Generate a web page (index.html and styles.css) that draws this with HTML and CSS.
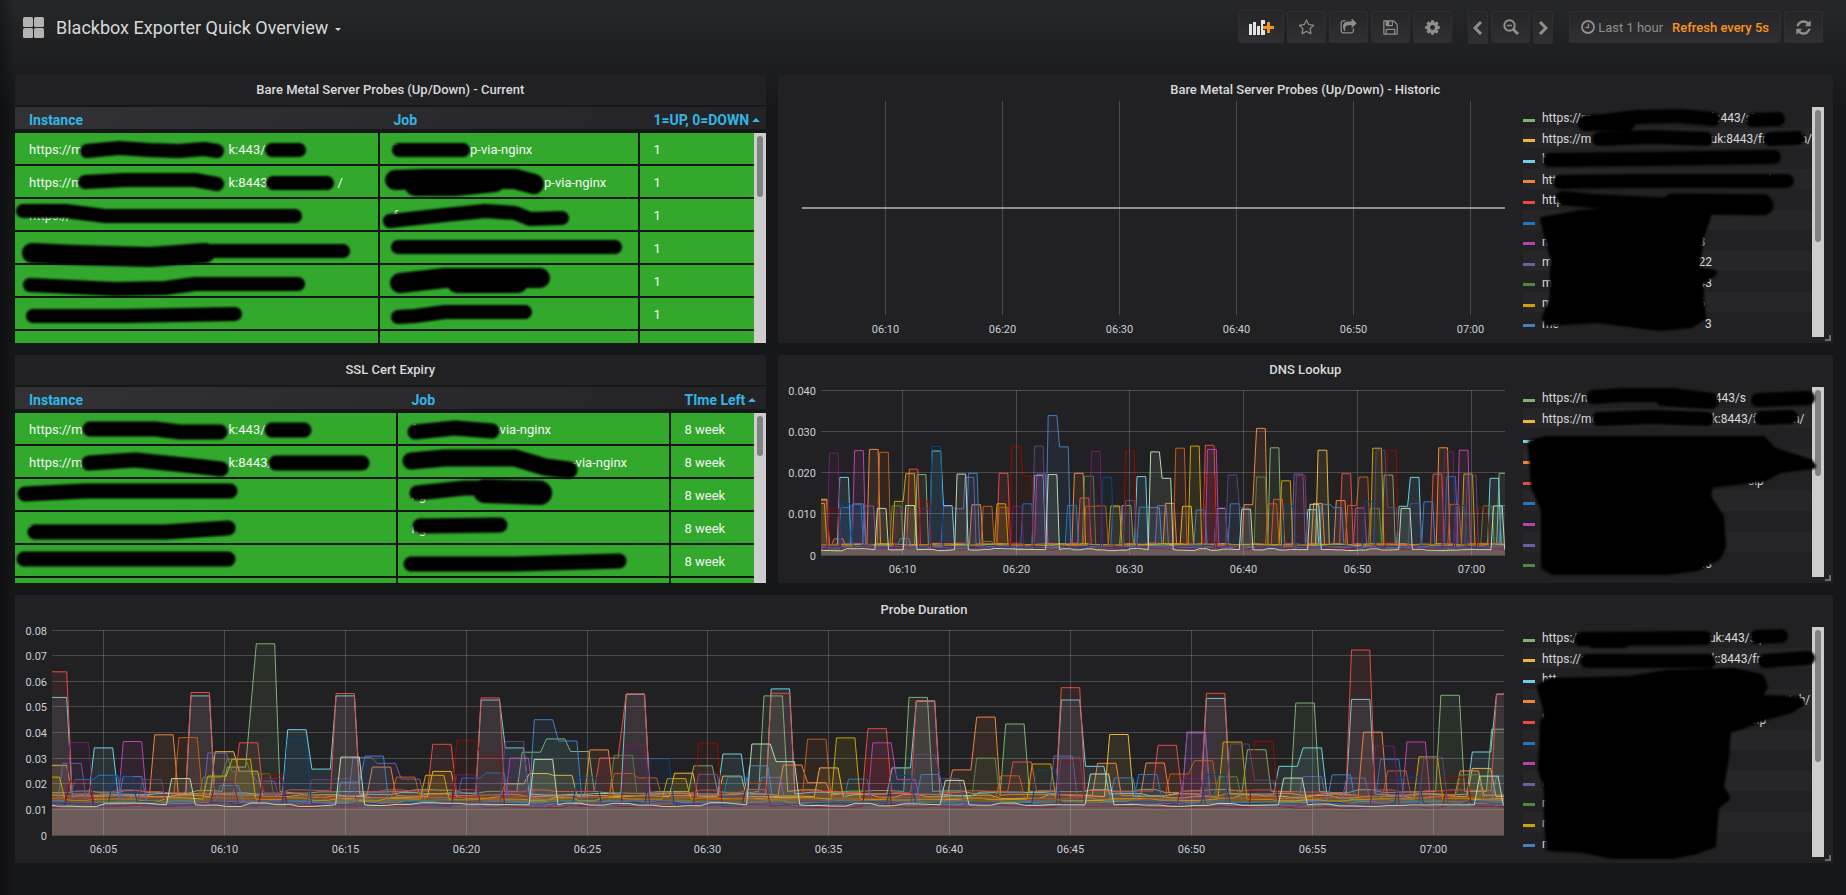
FILE: index.html
```html
<!DOCTYPE html>
<html lang="en">
<head>
    <meta charset="UTF-8">
    <meta name="viewport" content="width=device-width, initial-scale=1.0">
    <title>Blackbox Exporter Quick Overview</title>
    <link rel="stylesheet" href="styles.css">
</head>
<body>
    <!-- Navbar -->
    <header class="navbar">
        <button class="dash-title" type="button">
            <svg class="dash-logo" viewBox="0 0 21 21" aria-hidden="true"><rect width="10" height="10" rx="1.5"/><rect x="11" width="10" height="10" rx="1.5"/><rect y="11" width="10" height="10" rx="1.5"/><rect x="11" y="11" width="10" height="10" rx="1.5"/></svg>
            <span>Blackbox Exporter Quick Overview</span>
            <i class="caret"></i>
        </button>
        <nav class="toolbar">
            <div class="btn-group">
                <button class="btn btn-add" type="button" aria-label="Add panel">
                    <svg width="25" height="16" viewBox="0 0 25 16"><path fill="#e3e3e3" d="M0 5h3v11H0zM4 3h3v13H4zM8 7h3v9H8zM12 1h4v4h-2v6h2v5h-4z"/><path fill="#f7941d" d="M18 3h3v4h4v3h-4v4h-3v-4h-4V7h4z"/></svg>
                </button>
                <button class="btn" type="button" aria-label="Mark as favorite">
                    <svg width="17" height="17" viewBox="0 0 1792 1792"><path d="M1201 1004l306-297-422-62-189-382-189 382-422 62 306 297-73 421 378-199 377 199zm527-357q0 22-26 48l-363 354 86 500q1 7 1 20 0 50-41 50-19 0-40-12l-449-236-449 236q-22 12-40 12-21 0-31.500-14.500t-10.500-35.500q0-6 2-20l86-500-364-354q-25-27-25-48 0-37 56-46l502-73 225-455q19-41 49-41t49 41l225 455 502 73q56 9 56 46z"/></svg>
                </button>
                <button class="btn" type="button" aria-label="Share dashboard">
                    <svg width="17" height="17" viewBox="0 0 1792 1792"><path d="M1472 989v259q0 119-84.500 203.500t-203.500 84.500h-832q-119 0-203.500-84.500t-84.500-203.500v-832q0-119 84.500-203.500t203.500-84.500h255q13 0 22.500 9.500t9.500 22.500q0 27-26 32-77 26-133 60-10 4-16 4h-112q-66 0-113 47t-47 113v832q0 66 47 113t113 47h832q66 0 113-47t47-113v-214q0-19 18-29 28-13 54-37 16-16 35-8 21 9 21 29zm237-496l-384 384q-18 19-45 19-12 0-25-5-39-17-39-59v-192h-160q-323 0-438 131-119 137-74 473 3 23-20 34-8 2-12 2-16 0-26-13-10-14-21-31t-39.500-68.500-49.500-99.500-38.500-114-17.500-122q0-49 3.500-91t14-90 28-88 47-81.500 68.500-74 94.500-61.500 124.500-48.500 159.500-30.500 196.500-11h160v-192q0-42 39-59 13-5 25-5 26 0 45 19l384 384q19 19 19 45t-19 45z"/></svg>
                </button>
                <button class="btn" type="button" aria-label="Save dashboard">
                    <svg width="17" height="17" viewBox="0 0 1792 1792"><path d="M512 1536h768v-384h-768v384zm896 0h128v-896q0-14-10-38.500t-20-34.500l-281-281q-10-10-34-20t-39-10v416q0 40-28 68t-68 28h-576q-40 0-68-28t-28-68v-416h-128v1280h128v-416q0-40 28-68t68-28h832q40 0 68 28t28 68v416zm-384-928v-320q0-13-9.500-22.500t-22.500-9.500h-192q-13 0-22.500 9.500t-9.500 22.500v320q0 13 9.500 22.500t22.500 9.500h192q13 0 22.500-9.500t9.500-22.500zm640 32v928q0 40-28 68t-68 28h-1344q-40 0-68-28t-28-68v-1344q0-40 28-68t68-28h928q40 0 88 20t76 48l280 280q28 28 48 76t20 88z"/></svg>
                </button>
                <button class="btn" type="button" aria-label="Settings">
                    <svg width="17" height="17" viewBox="0 0 1792 1792"><path d="M1152 896q0-106-75-181t-181-75-181 75-75 181 75 181 181 75 181-75 75-181zm512-109v222q0 12-8 23t-20 13l-185 28q-19 54-39 91 35 50 107 138 10 12 10 25t-9 23q-27 37-99 108t-94 71q-12 0-26-9l-138-108q-44 23-91 38-16 136-29 186-7 28-36 28h-222q-14 0-24.500-8.500t-11.500-21.500l-28-184q-49-16-90-37l-141 107q-10 9-25 9-14 0-25-11-126-114-165-168-7-10-7-23 0-12 8-23 15-21 51-66.500t54-70.500q-27-50-41-99l-183-27q-13-2-21-12.500t-8-23.500v-222q0-12 8-23t19-13l186-28q14-46 39-92-40-57-107-138-10-12-10-24 0-10 9-23 26-36 98.500-107.500t94.500-71.500q13 0 26 10l138 107q44-23 91-38 16-136 29-186 7-28 36-28h222q14 0 24.500 8.500t11.500 21.500l28 184q49 16 90 37l142-107q9-9 24-9 13 0 25 10 129 119 165 170 7 8 7 22 0 12-8 23-15 21-51 66.500t-54 70.500q26 50 41 98l183 28q13 2 21 12.500t8 23.500z"/></svg>
                </button>
            </div>
            <div class="btn-group">
                <button class="btn btn-narrow" type="button" aria-label="Back in time">
                    <svg class="line" width="10" height="14" viewBox="0 0 10 14"><path stroke-width="3" d="M8 1L2 7l6 6"/></svg>
                </button>
                <button class="btn" type="button" aria-label="Zoom out">
                    <svg class="line" width="16" height="16" viewBox="0 0 16 16"><circle cx="6.500" cy="6.500" r="5.200" stroke-width="2"/><path stroke-width="3" d="M10.500 10.500L15 15"/><path stroke-width="1.500" d="M4 6.500h5"/></svg>
                </button>
                <button class="btn btn-narrow" type="button" aria-label="Forward in time">
                    <svg class="line" width="10" height="14" viewBox="0 0 10 14"><path stroke-width="3" d="M2 1l6 6-6 6"/></svg>
                </button>
            </div>
            <div class="btn-group">
                <button class="btn btn-time" type="button">
                    <svg class="line" width="14" height="14" viewBox="0 0 14 14"><circle cx="7" cy="7" r="6" stroke-width="1.800"/><path stroke-width="1.300" d="M7.500 3.500v4H4.500"/></svg>
                    <span>Last 1 hour</span>
                    <span class="refresh">Refresh every 5s</span>
                </button>
                <button class="btn" type="button" aria-label="Refresh">
                    <svg width="17" height="17" viewBox="0 0 1792 1792"><path d="M1639 1056q0 5-1 7-64 268-268 434.500t-478 166.500q-146 0-282.500-55t-243.500-157l-129 129q-19 19-45 19t-45-19-19-45v-448q0-26 19-45t45-19h448q26 0 45 19t19 45-19 45l-137 137q71 66 161 102t187 36q134 0 250-65t186-179q11-17 53-117 8-23 30-23h192q13 0 22.500 9.500t9.500 22.500zm25-800v448q0 26-19 45t-45 19h-448q-26 0-45-19t-19-45 19-45l138-138q-148-137-349-137-134 0-250 65t-186 179q-11 17-53 117-8 23-30 23h-199q-13 0-22.500-9.500t-9.500-22.500v-7q65-268 270-434.500t480-166.500q146 0 284 55.500t245 156.500l130-129q19-19 45-19t45 19 19 45z"/></svg>
                </button>
            </div>
        </nav>
    </header>

    <main class="dashboard">
        <!-- Up/Down table -->
        <section class="panel panel-tall col-5">
            <h2 class="panel-title">Bare Metal Server Probes (Up/Down) - Current</h2>
            <div class="table-wrap">
                <table class="probes">
                    <thead>
                        <tr><th>Instance</th><th>Job</th><th>1=UP, 0=DOWN<i class="sort"></i></th></tr>
                    </thead>
                    <tbody>
                        <tr><td>https://m<i class="cut cut-xl"></i>k:443/s</td><td>f<i class="cut cut-md"></i>p-via-nginx</td><td>1</td></tr>
                        <tr><td>https://m<i class="cut cut-xl"></i>k:8443/f<i class="cut cut-sm"></i>/</td><td>f<i class="cut cut-xl"></i>p-via-nginx</td><td>1</td></tr>
                        <tr><td>https://</td><td>f</td><td>1</td></tr>
                        <tr><td></td><td>f</td><td>1</td></tr>
                        <tr><td></td><td>f</td><td>1</td></tr>
                        <tr><td></td><td>n</td><td>1</td></tr>
                        <tr><td></td><td></td><td></td></tr>
                    </tbody>
                </table>
                <div class="scrollbar table-scroll"><div class="thumb thumb-up"></div></div>
            </div>
            <svg class="marker" aria-hidden="true">
                <g stroke-width="14">
                    <path d="M72 76L104 73L134 75L164 76L189 74L202 76M257 75H284M384 75H448"/>
                    <path d="M70 107L110 105L180 105L202 109M258 108H312"/>
                    <path d="M8 136L50 136L90 141H280M375 146L430 140L470 136L500 138L515 144L547 143"/>
                    <path d="M190 176H328M383 172H600"/>
                    <path d="M15 210L100 214L150 213L180 209H283"/>
                    <path d="M18 241L110 241L220 239M383 242L400 241L430 237H510"/>
                </g>
                <g stroke-width="20">
                    <path d="M380 105L410 104L500 104L519 109"/>
                    <path d="M400 111L440 111L480 107"/>
                    <path d="M17 178L60 180L135 182L190 178"/>
                    <path d="M385 208L430 203L525 203M442 208H503"/>
                </g>
            </svg>
        </section>

        <!-- Up/Down graph -->
        <section class="panel panel-tall col-7">
            <h2 class="panel-title">Bare Metal Server Probes (Up/Down) - Historic</h2>
            <div class="graph">
                <div class="chart" id="chart-updown"></div>
                <div class="legend">
                    <ul>
                        <li>https://m<i class="cut cut-lg"></i>k:443/si</li>
                        <li>https://m<i class="cut cut-lg"></i>uk:8443/fre<i class="cut cut-xs"></i>h/</li>
                        <li>h</li>
                        <li>htt<i class="cut cut-xxl"></i>ch/</li>
                        <li>http</li>
                        <li></li>
                        <li>m<i class="cut cut-xl"></i>3</li>
                        <li>m<i class="cut cut-xl"></i>22</li>
                        <li>m<i class="cut cut-xl"></i>43</li>
                        <li>m<i class="cut cut-xl"></i>6</li>
                        <li>me<i class="cut cut-xl"></i>3</li>
                    </ul>
                    <div class="scrollbar"><div class="thumb thumb-legend"></div></div>
                    <svg class="marker" aria-hidden="true">
                        <g stroke-width="14">
                            <path d="M63 15L80 14L114 10L157 9L190 12M62 17L105 17M230 13L255 12"/>
                            <path d="M76 32L130 30L183 32M247 32L275 31"/>
                            <path d="M27 53L120 52L251 50"/>
                            <path d="M37 75L110 74H264"/>
                            <path d="M40 91L70 94L150 98"/>
                        </g>
                        <path stroke-width="21" d="M150 97L170 97L240 98"/>
                        <path class="blob" d="M20 113L57 106L97 103L186 106L178 130L173 163L191 166L177 176L180 210L168 218L137 221L74 213L24 216L22 211L30 190L30 150z"/>
                    </svg>
                </div>
            </div>
            <i class="resize"></i>
        </section>

        <!-- SSL table -->
        <section class="panel panel-short col-5">
            <h2 class="panel-title">SSL Cert Expiry</h2>
            <div class="table-wrap">
                <table class="certs">
                    <thead>
                        <tr><th>Instance</th><th>Job</th><th>TIme Left<i class="sort"></i></th></tr>
                    </thead>
                    <tbody>
                        <tr><td>https://m<i class="cut cut-xl"></i>k:443/s</td><td>f<i class="cut cut-md2"></i>-via-nginx</td><td>8 week</td></tr>
                        <tr><td>https://m<i class="cut cut-xl"></i>k:8443/f</td><td>f<i class="cut cut-xl2"></i>-via-nginx</td><td>8 week</td></tr>
                        <tr><td></td><td>ng</td><td>8 week</td></tr>
                        <tr><td>m</td><td>ng</td><td>8 week</td></tr>
                        <tr><td></td><td></td><td>8 week</td></tr>
                        <tr><td></td><td></td><td></td></tr>
                    </tbody>
                </table>
                <div class="scrollbar table-scroll"><div class="thumb thumb-cert"></div></div>
            </div>
            <svg class="marker" aria-hidden="true">
                <g stroke-width="15">
                    <path d="M75 74L140 74L165 77L205 77M257 75H289M400 77L440 73L477 76"/>
                    <path d="M74 108L120 105L170 110L206 114M261 108H347"/>
                    <path d="M10 139L70 136H215M402 138L450 133H525"/>
                    <path d="M20 177L150 177L213 173M405 171L485 170"/>
                    <path d="M9 204H213M396 209L500 209L604 206"/>
                </g>
                <path stroke-width="17" d="M396 106L430 103L500 103L530 112L554 115"/>
                <path stroke-width="24" d="M470 136L525 138"/>
            </svg>
        </section>

        <!-- DNS graph -->
        <section class="panel panel-short col-7">
            <h2 class="panel-title">DNS Lookup</h2>
            <div class="graph">
                <div class="chart" id="chart-dns"></div>
                <div class="legend">
                    <ul>
                        <li>https://me<i class="cut cut-lg2"></i>:443/s</li>
                        <li>https://me<i class="cut cut-lg2"></i>k:8443/f<i class="cut cut-sm2"></i>h/</li>
                        <li></li>
                        <li></li>
                        <li><i class="cut cut-xxl"></i>sip</li>
                        <li><i class="cut cut-xxl2"></i>6</li>
                        <li></li>
                        <li><i class="cut cut-xl"></i>:8</li>
                        <li>m<i class="cut cut-xl"></i>43</li>
                    </ul>
                    <div class="scrollbar"><div class="thumb thumb-dns"></div></div>
                    <svg class="marker" aria-hidden="true">
                        <g stroke-width="14">
                            <path d="M70 10L100 8L150 8L188 13M140 12L188 15M235 13L285 11"/>
                            <path d="M76 32L130 30L184 32M238 31L268 30"/>
                        </g>
                        <path class="blob" d="M8 56L24 52L124 52L240 52L250 63L287 75L290 79L257 83L240 92L187 98L185 110L198 130L200 160L195 170L174 181L144 185L30 185L21 180L21 123L11 100z"/>
                    </svg>
                </div>
            </div>
            <i class="resize"></i>
        </section>

        <!-- Probe duration graph -->
        <section class="panel panel-tall col-12">
            <h2 class="panel-title">Probe Duration</h2>
            <div class="graph">
                <div class="chart" id="chart-probe"></div>
                <div class="legend">
                    <ul>
                        <li>https://<i class="cut cut-xl4"></i>uk:443/sip</li>
                        <li>https://m<i class="cut cut-lg"></i>k:8443/fre</li>
                        <li>htt<i class="cut cut-lg"></i>x.co.uk:4</li>
                        <li><i class="cut cut-sm2"></i>m<i class="cut cut-xl3"></i>tch/</li>
                        <li>h<i class="cut cut-xs2"></i>med<i class="cut cut-xl"></i>sip</li>
                        <li></li>
                        <li></li>
                        <li>m</li>
                        <li>m</li>
                        <li>m</li>
                        <li>me</li>
                    </ul>
                    <div class="scrollbar"><div class="thumb thumb-legend"></div></div>
                    <svg class="marker" aria-hidden="true">
                        <g stroke-width="14">
                            <path d="M58 12L182 11M70 14L100 14M234 10L258 9"/>
                            <path d="M64 34L186 34M242 34L285 31"/>
                        </g>
                        <path class="blob" d="M17 60L26 54L107 52L144 46L210 44L238 50L242 60L235 71L275 72L279 76L268 83L240 91L220 99L205 103L203 130L198 160L204 171L193 180L190 218L174 224L150 229L90 229L60 223L26 221L24 196L24 163L18 143L20 96L24 86z"/>
                    </svg>
                </div>
            </div>
            <i class="resize"></i>
        </section>
    </main>

    <script src="charts.js"></script>
</body>
</html>
```
FILE: styles.css
```css
* {
    box-sizing: border-box;
}

body {
    margin: 0;
    min-height: 100vh;
    padding: 0 13px 0 15px;
    font-family: Roboto, "Liberation Sans", sans-serif;
    font-size: 13px;
    color: #d8d9da;
    background:
        linear-gradient(90deg, rgba(0, 0, 0, 0.35), transparent 15px),
        linear-gradient(180deg, #262729, #161719 110px) #161719;
}

h2, ul {
    margin: 0;
    padding: 0;
}

button {
    font-family: inherit;
    color: inherit;
    cursor: pointer;
}

/* Navbar */
.navbar {
    display: flex;
    justify-content: space-between;
    align-items: flex-start;
    height: 75px;
    padding: 10px 10px 0 8px;
}

.dash-title {
    display: flex;
    align-items: center;
    gap: 12px;
    height: 34px;
    padding: 0;
    border: none;
    background: none;
    font-size: 18px;
}

.dash-logo {
    width: 21px;
    height: 21px;
    fill: #b3b3b3;
}

.caret {
    margin: 5px 0 0 -5px;
    border: 3px solid transparent;
    border-top-color: #d8d9da;
    border-bottom: none;
}

.toolbar {
    display: flex;
    gap: 16px;
}

.btn-group {
    display: flex;
    align-items: flex-start;
    gap: 3px;
}

.btn {
    display: flex;
    align-items: center;
    justify-content: center;
    width: 39px;
    height: 32px;
    margin-top: 1px;
    padding: 0;
    border: 1px solid #2f2f32;
    border-radius: 2px;
    background: linear-gradient(180deg, #262628, #303032);
    color: #8e8e8e;
    font-size: 13px;
}

.btn svg {
    fill: currentColor;
}

.btn svg.line {
    fill: none;
    stroke: currentColor;
}

.btn-add {
    width: 46px;
    height: 33px;
    margin-top: 0;
}

.btn-narrow {
    width: 20px;
    height: 33px;
}

.btn-time {
    width: auto;
    padding: 0 11px;
    gap: 3px;
    font-weight: 500;
}

.btn-time span:not(.refresh) {
    font-weight: 400;
}

.refresh {
    margin-left: 6px;
    color: #f7941d;
}

/* Panels */
.dashboard {
    display: grid;
    grid-template-columns: repeat(12, 1fr);
    gap: 12px;
}

.panel {
    position: relative;
    display: flex;
    flex-direction: column;
    min-width: 0;
    background: #212124;
    border-radius: 2px;
}

.panel-tall { height: 268px; }
.panel-short { height: 228px; }
.col-5 { grid-column: span 5; }
.col-7 { grid-column: span 7; }
.col-12 { grid-column: span 12; }

.panel-title {
    padding-top: 4px;
    line-height: 22px;
    font-size: 13px;
    font-weight: 500;
    text-align: center;
}

/* Tables */
.table-wrap {
    position: relative;
    flex: 1;
    overflow: hidden;
    padding-top: 4px;
}

table {
    width: 100%;
    table-layout: fixed;
    border-spacing: 0;
}

/* the first column takes what is left */
.probes th:nth-child(2) { width: 260px; }
.probes th:nth-child(3) { width: 126px; }
.certs th:nth-child(2) { width: 273px; }
.certs th:nth-child(3) { width: 95px; }

thead tr {
    background: linear-gradient(135deg, #323235, #232326);
}

th {
    height: 28px;
    padding: 4px 0 0 14px;
    border: solid #161719;
    border-width: 2px 0 4px;
    color: #33b5e5;
    font-size: 14px;
    font-weight: 700;
    line-height: 18px;
    text-align: left;
    white-space: nowrap;
}

.sort {
    display: inline-block;
    margin: 0 0 3px 3px;
    border: 4px solid transparent;
    border-bottom-color: #33b5e5;
    border-top: none;
}

td {
    height: 33px;
    padding: 2px 0 0 14px;
    border: solid #161719;
    border-width: 0 2px 2px 0;
    background: #32a82d;
    color: #f2f7f2;
    white-space: nowrap;
    overflow: hidden;
}

/* Scrollbars */
.scrollbar {
    width: 12px;
    padding: 3px;
    background: #cdcdcd;
}

.table-scroll {
    position: absolute;
    top: 32px;
    right: 0;
    bottom: 0;
}

.thumb {
    border-radius: 3px;
    background: #7f8282;
}

.thumb-up { height: 61px; }
.thumb-cert { height: 40px; }
.thumb-dns { height: 86px; }
.thumb-legend { height: 132px; }

/* Graphs */
.graph {
    display: flex;
    flex: 1;
    min-height: 0;
    padding: 0 9px;
    gap: 9px;
}

.chart {
    flex: 1;
    min-width: 0;
}

.chart svg {
    display: block;
}

.chart text {
    fill: #c7d0d9;
    font-size: 11px;
}

.legend {
    position: relative;
    display: flex;
    width: 301px;
    margin: 6px 0;
}

.legend ul {
    display: flex;
    flex-direction: column;
    flex: 1;
    min-width: 0;
    padding-bottom: 4px;
    list-style: none;
    font-size: 12px;
}

.legend li {
    display: flex;
    align-items: center;
    flex: 1;
    padding-top: 2px;
    white-space: nowrap;
}

.legend li::before {
    content: "";
    width: 12px;
    height: 3px;
    margin: 4px 7px 0 0;
    background: #7eb26d;
}

.legend li:nth-child(even) { background: #262629; }
.legend li:nth-child(2)::before { background: #eab839; }
.legend li:nth-child(3)::before { background: #6ed0e0; }
.legend li:nth-child(4)::before { background: #ef843c; }
.legend li:nth-child(5)::before { background: #e24d42; }
.legend li:nth-child(6)::before { background: #1f78c1; }
.legend li:nth-child(7)::before { background: #ba43a9; }
.legend li:nth-child(8)::before { background: #705da0; }
.legend li:nth-child(9)::before { background: #508642; }
.legend li:nth-child(10)::before { background: #cca300; }
.legend li:nth-child(11)::before { background: #447ebc; }

.resize {
    position: absolute;
    right: 2px;
    bottom: 2px;
    width: 6px;
    height: 6px;
    border: solid #6a6a6c;
    border-width: 0 2px 2px 0;
}

/* Blacked out host names */
.cut { display: inline-block; }
.cut-xs { width: 28px; }
.cut-xs2 { width: 32px; }
.cut-sm2 { width: 36px; }
.cut-sm { width: 60px; }
.cut-md { width: 72px; }
.cut-md2 { width: 80px; }
.cut-lg2 { width: 114px; }
.cut-lg { width: 120px; }
.cut-xl4 { width: 128px; }
.cut-xl { width: 146px; }
.cut-xl2 { width: 156px; }
.cut-xxl2 { width: 160px; }
.cut-xl3 { width: 200px; }
.cut-xxl { width: 206px; }

.marker {
    position: absolute;
    top: 0;
    left: 0;
    width: 100%;
    height: 100%;
    overflow: visible;
    pointer-events: none;
    fill: none;
    stroke: #000;
    stroke-linecap: round;
    stroke-linejoin: round;
    filter: blur(1px);
}

.marker .blob {
    fill: #000;
    stroke-width: 6px;
}
```
FILE: charts.js
```js
const COLORS = {
    green: "#7EB26D", yellow: "#EAB839", cyan: "#6ED0E0", orange: "#EF843C",
    red: "#E24D42", blue: "#1F78C1", magenta: "#BA43A9", purple: "#705DA0",
    darkGreen: "#508642", darkYellow: "#CCA300", steel: "#447EBC", darkOrange: "#C15C17",
    darkRed: "#890F02", navy: "#0A437C", plum: "#6D1F62", violet: "#584477", lightGreen: "#B7DBAB"
};

// each spike is [minute after 06:00, value in ms]
const DNS = {
    green: [2.5, [[11.7, 19.5], [29.7, 12], [42.7, 26], [52.7, 19.4], [62.8, 19.8]]],
    yellow: [2.4, [[3, 13.5], [35, 11.8], [46.9, 25.4]]],
    cyan: [2.1, [[4.9, 18.8], [13, 25.2], [14, 12], [22, 19.3], [31, 19], [38, 11.3], [46, 11], [54, 11.8], [55, 18.8], [62, 18.6]]],
    orange: [2.4, [[4.4, 3.9], [7.5, 25.6], [16.5, 12.2], [25.5, 19.8], [33.5, 12.5], [40.4, 12.2], [41.5, 30.7], [46.5, 12.5], [48.5, 13.2], [57.5, 26]]],
    red: [2.6, [[3, 13.2], [11, 20.8], [18.9, 19.8], [26, 13.8], [37, 26.6], [43, 13.5], [49, 19.7], [57, 19.6]]],
    blue: [2.1, [[6, 12.3], [21, 12.4], [24.9, 12], [58.2, 19]]],
    magenta: [1.8, [[6.2, 25.3], [22.2, 19.6], [37.2, 25.6], [50.2, 11.4], [59.3, 25.4]]],
    purple: [1.9, [[7.1, 11.9], [14, 11.8], [15, 11.2], [15.9, 18.8], [28.9, 11.7], [32.8, 12], [44.8, 19.6], [59, 12]]],
    darkGreen: [2.3, [[9.5, 11.9], [17.5, 3.3], [26.4, 19.1], [41.5, 18.9], [51.5, 11.3], [61.4, 11.9]]],
    darkYellow: [2.5, [[2.8, 12.5], [9.7, 13], [10.7, 19.7], [18.7, 12.4], [28.7, 11.9], [35.7, 26.4], [43.7, 18], [51.7, 25.9], [59.7, 19.6]]],
    steel: [2, [[5, 11.5], [6.2, 12.4], [10.2, 4], [16.2, 19.8], [23.2, 33.8], [24.2, 26.2], [31.2, 11.6], [32.2, 11.5], [36.2, 10.9], [39.2, 12.4], [47.2, 12.3], [48.2, 11.5], [56.2, 12.9], [63, 12]]],
    darkOrange: [2.3, [[8.4, 24.9], [17.5, 11.8], [18.9, 11.6], [26.5, 11.8], [27.5, 11.9], [34.4, 25.9], [42.5, 12.4], [49.5, 12], [50.5, 18.9], [58.5, 12.3]]],
    darkRed: [1.7, [[4, 11.4], [12, 13], [20, 26.4], [21, 19.1], [30, 25.2], [37, 19.3], [45, 19], [53, 25.4], [61, 11.6]]],
    navy: [2.1, [[5.1, 12.4], [13, 26.3], [28, 18.8], [44, 11.8], [51, 13], [59, 12]]],
    plum: [1.4, [[4, 24.7], [9.9, 11], [12, 11.3], [20.1, 11.8], [27, 25.1], [38, 11.5], [58, 25]]],
    violet: [1.9, [[22, 26.4], [30, 13.2], [39, 19.4], [40, 11.5], [45, 19.3], [52, 25.4], [53, 11.5], [55, 12.5], [60, 19.4]]],
    lightGreen: [1.3, [[8.2, 11.3], [10.7, 12], [15.2, 19.6], [23.2, 19.5], [32.2, 25], [33.2, 18.6], [40.2, 11.1], [46.2, 12.3], [54.2, 11.3], [62.3, 11.9]]]
};

const PROBE = {
    green: [17, [[10.5, 26.5], [11.7, 74.6], [22.7, 32.3], [23.7, 37.5], [24.7, 32.6], [29.8, 27], [32.7, 54.3], [38.7, 53.7], [42.7, 43.3], [52.7, 33.3], [54.7, 51.5], [60.7, 54.5], [62.8, 41.3]]],
    yellow: [15, [[3.1, 27.2], [10, 32.5], [11, 24.9], [19, 24.8], [22, 20], [23, 24], [24, 23.3], [29, 24.1], [31, 23], [35, 26.2], [47, 39.2], [62, 26]]],
    cyan: [16, [[3.1, 53.7], [5, 34], [9, 54.3], [13, 41.1], [14, 25.7], [15, 54.3], [21, 52.7], [22, 34], [27, 54.9], [31, 31.6], [33, 57], [38, 26.2], [39, 52.2], [45, 52.7], [46, 26.8], [51, 53.3], [54, 26.8], [55, 34], [57, 52.9], [62, 32.4], [63, 55]]],
    orange: [15.5, [[7.5, 39.1], [16.5, 26.5], [25.5, 33.2], [33.5, 27.3], [34.5, 20.4], [40.5, 25.4], [41.5, 46], [46.5, 28], [48.5, 28.1], [57.5, 40.1], [61.5, 25]]],
    red: [17, [[3.1, 63.7], [9, 55.6], [11, 36], [15, 55.2], [19, 35.4], [21, 53.5], [25.9, 30], [27, 55.1], [33, 55.3], [37, 41.5], [39, 52.5], [43, 28.5], [45, 57.5], [49, 35], [51, 55.3], [57, 72.2], [63, 55]]],
    blue: [13, [[4.2, 21.7], [5.2, 23.3], [20.2, 22.2], [21.2, 24.2], [31.2, 22.5], [36.2, 21.8], [48.2, 23.6], [58.2, 29.6]]],
    magenta: [12, [[6.2, 36.5], [22.2, 30], [37.2, 36], [38.2, 21.7], [50.2, 40.2], [59.3, 36.3]]],
    purple: [12.5, [[3.7, 28], [9.7, 32], [10.7, 24.7], [11.7, 21], [15.7, 30.2], [16.7, 28], [17.7, 21.8], [30, 23.7], [32.6, 22.5], [44.7, 30.8], [50.2, 39.8], [55, 22.8], [56.8, 22.2]]],
    darkGreen: [13, [[9.5, 22.5], [10.5, 29.6], [11.5, 23.8], [26.5, 31.1], [41.5, 30], [51.5, 22.7], [61.5, 23.5]]],
    darkYellow: [14, [[2.8, 22.6], [9.7, 23], [10.7, 29.6], [18.7, 23.3], [28.7, 22], [35.7, 37.9], [43.8, 27.7], [51.7, 36.3], [59.8, 30.5]]],
    steel: [12.5, [[6.2, 22.8], [10.2, 19.3], [15.2, 20.6], [16.2, 30.8], [23.2, 45], [24.2, 36.7], [32.1, 27], [39.2, 23.6], [47.2, 22.3], [56.2, 23.5], [63, 23]]],
    darkOrange: [14.5, [[8.5, 38], [17.5, 22.6], [26.5, 24], [27.5, 22.3], [34.5, 37.4], [42.5, 23.1], [49.5, 23.8], [50.5, 29], [58.5, 25]]],
    darkRed: [11.2, [[4, 21.1], [12, 23.5], [20, 37], [21, 30.7], [30, 35.9], [32, 20.4], [37, 29.7], [45, 28.8], [53, 36.6], [61, 22.6]]],
    navy: [12.3, [[5.8, 23], [13, 37.3], [25, 22.5], [28, 29.7], [38, 23.3], [44, 25.1], [51, 23.6], [59, 22.6]]],
    plum: [11.3, [[4, 36.1], [10, 20.7], [12, 22], [20, 23.5], [27, 35], [50, 22], [58, 34.7]]],
    violet: [12.3, [[7, 21.7], [14, 21.6], [14.9, 22], [22, 36.5], [39, 31.4], [40, 22], [45, 30.4], [52, 35.5], [53, 21.4], [60, 30.4]]],
    lightGreen: [11.8, [[8.2, 22], [15.2, 30.4], [23.2, 29.5], [32.2, 35.5], [33.2, 28.6], [40.2, 21.3], [46.2, 23.8], [54.2, 22.2], [62.3, 23]]]
};

const START = 2.87;
const END = 62.93;

function noise(n) {
    const s = Math.sin(n * 12.9898) * 43758.5453;
    return s - Math.floor(s) - 0.5;
}

// Turn base value + spikes into a list of [minute, value]
function buildLine(base, spikes, seed, wobble) {
    const points = [];
    const inSpike = t => spikes.some(s => Math.abs(s[0] - t) < 0.9);
    for (let t = 2; t < 64; t++) {
        const m = t + (seed % 5) / 5;
        const v = base + noise(seed * 71 + t) * wobble;
        if (!inSpike(m)) {
            points.push([m - 0.3, v], [m + 0.3, v]);
        }
    }
    spikes.forEach(([t, v], i) => {
        const prev = i > 0 ? spikes[i - 1][0] : -9;
        const next = i < spikes.length - 1 ? spikes[i + 1][0] : 99;
        if (t - prev > 1.3) points.push([t - 0.6, base]);
        points.push([t - 0.38, v], [t + 0.38, v]);
        if (next - t > 1.3) points.push([t + 0.6, base]);
    });
    return points.sort((a, b) => a[0] - b[0]);
}

function drawChart(id, opt) {
    const el = document.getElementById(id);
    el.innerHTML = "";
    const w = el.clientWidth;
    const h = el.clientHeight;
    const left = opt.left, right = w - 10, top = opt.top, bottom = h - 28;
    const x = t => left + (t - START) / (END - START) * (right - left);
    const y = v => bottom - v / opt.max * (bottom - top);
    let out = `<svg width="${w}" height="${h}"><clipPath id="${id}-clip"><rect x="${left}" y="0" width="${right - left}" height="${h}"/></clipPath><g clip-path="url(#${id}-clip)">`;

    Object.entries(opt.series).forEach(([name, [base, spikes]], i) => {
        const line = buildLine(base, spikes, i + 1, opt.wobble)
            .map(p => x(p[0]).toFixed(1) + " " + y(p[1]).toFixed(1)).join("L");
        out += `<path d="M${line}V${bottom}H${left - 30}z" fill="${COLORS[name]}" fill-opacity="0.1"/>`;
        out += `<path d="M${line}" fill="none" stroke="${COLORS[name]}" stroke-width="1"/>`;
    });
    if (opt.flat) {
        out += `<path d="M${left} ${opt.flat}H${right}" stroke="#8e8e8e" stroke-width="2"/>`;
    }
    out += "</g>";

    // grid lines go over the fills
    opt.yLabels.forEach((label, i) => {
        const yy = Math.floor(y(opt.max * i / (opt.yLabels.length - 1))) + 0.5;
        out += `<path d="M${left} ${yy}H${right}" stroke="#c8c8c8" stroke-opacity="0.25"/>`;
        out += `<text x="${left - 5}" y="${yy + 4}" text-anchor="end">${label}</text>`;
    });
    for (let t = opt.step; t <= 60; t += opt.step) {
        const xx = Math.floor(x(t)) + 0.5;
        const label = t === 60 ? "07:00" : "06:" + String(t).padStart(2, "0");
        out += `<path d="M${xx} ${top}V${bottom}" stroke="#c8c8c8" stroke-opacity="0.25"/>`;
        out += `<text x="${xx}" y="${bottom + 18}" text-anchor="middle">${label}</text>`;
    }
    el.innerHTML = out + "</svg>";
}

function drawAll() {
    drawChart("chart-updown", { left: 15, top: 0, max: 1, step: 10, yLabels: [], series: {}, flat: 107, wobble: 0 });
    drawChart("chart-dns", {
        left: 34, top: 9, max: 40, step: 10, wobble: 0.6, series: DNS,
        yLabels: ["0", "0.010", "0.020", "0.030", "0.040"]
    });
    drawChart("chart-probe", {
        left: 28, top: 9, max: 80, step: 5, wobble: 1.6, series: PROBE,
        yLabels: ["0", "0.01", "0.02", "0.03", "0.04", "0.05", "0.06", "0.07", "0.08"]
    });
}

drawAll();
window.addEventListener("resize", drawAll);
```
